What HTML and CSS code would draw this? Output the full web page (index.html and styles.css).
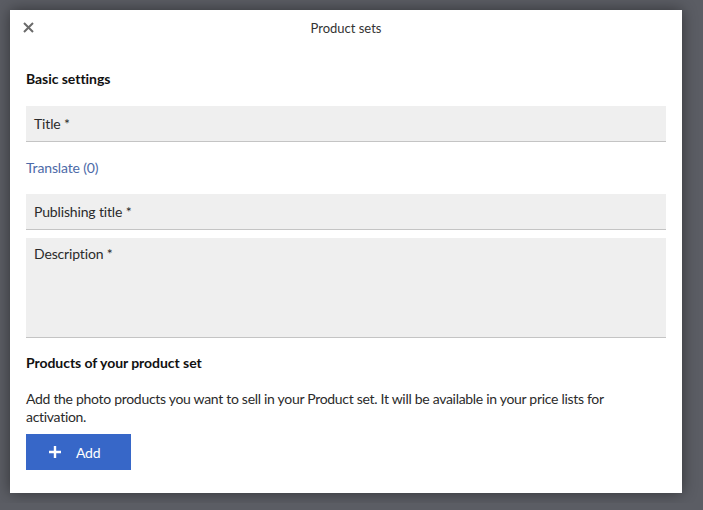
FILE: index.html
```html
<!DOCTYPE html>
<html lang="en">
<head>
    <meta charset="UTF-8">
    <meta name="viewport" content="width=device-width, initial-scale=1.0">
    <title>Product sets</title>
    <link rel="stylesheet" href="styles.css">
</head>
<body>

    <div class="modal">

        <div class="header">
            <span class="close">
                <svg width="11" height="11" viewBox="0 0 11 11">
                    <path d="M1 1 L10 10 M10 1 L1 10" stroke="#6b6b6b" stroke-width="2" fill="none"/>
                </svg>
            </span>
            <div class="title">Product sets</div>
        </div>

        <h2 class="section">Basic settings</h2>

        <div class="field">Title *</div>

        <a class="link" href="#">Translate (0)</a>

        <div class="field">Publishing title *</div>

        <div class="field area">Description *</div>

        <h2 class="section second">Products of your product set</h2>

        <p class="info">Add the photo products you want to sell in your Product set. It will be available in your price lists for activation.</p>

        <button class="add">
            <svg width="14" height="14" viewBox="0 0 14 14">
                <path d="M7 1 V13 M1 7 H13" stroke="#ffffff" stroke-width="2.4" fill="none"/>
            </svg>
            <span>Add</span>
        </button>
    </div>

</body>
</html>
```

FILE: styles.css
```css
*{
    margin: 0;
    padding: 0;
    box-sizing: border-box;
}
body{
    background: #5b5d64;
    padding: 10px;
    font-family: Lato, "Noto Sans", sans-serif;
    color: #222222;
    font-size: 14px;
}
.modal{
    width: 672px;
    height: 483px;
    background: #ffffff;
    padding: 0 16px 23px;
    box-shadow: 0 0 14px rgba(0,0,0,0.45);
    display: flex;
    flex-direction: column;
}
.header{
    height: 36px;
    position: relative;
    display: flex;
    align-items: center;
    justify-content: center;
}
.header .close{
    position: absolute;
    left: -3px;
    top: 12px;
    display: flex;
}
.header .title{
    font-size: 13px;
    color: #333333;
}
.section{
    font-size: 14px;
    font-weight: bold;
    line-height: 20px;
    margin-top: 23px;
    color: #111111;
    letter-spacing: -0.05px;
}
.section.second{
    margin-top: 15px;
}
.field{
    margin-top: 17px;
    height: 36px;
    background: #efefef;
    border-bottom: 1px solid #c4c4c4;
    padding: 0 8px;
    line-height: 35px;
    color: #2b2b2b;
    letter-spacing: -0.15px;
}
.field.area{
    margin-top: 8px;
    height: 100px;
    line-height: 20px;
    padding-top: 6px;
}
.link{
    display: block;
    margin-top: 16px;
    margin-bottom: -1px;
    line-height: 20px;
    color: #4d6aa8;
    text-decoration: none;
    letter-spacing: -0.15px;
}
.info{
    margin-top: 17px;
    line-height: 18px;
    color: #2b2b2b;
    letter-spacing: -0.3px;
}
.add{
    margin-top: 8px;
    width: 105px;
    height: 36px;
    background: #3767c8;
    border: none;
    color: #ffffff;
    font-family: inherit;
    font-size: 14px;
    letter-spacing: -0.2px;
    display: flex;
    align-items: center;
    padding-left: 22px;
    gap: 14px;
}
```
